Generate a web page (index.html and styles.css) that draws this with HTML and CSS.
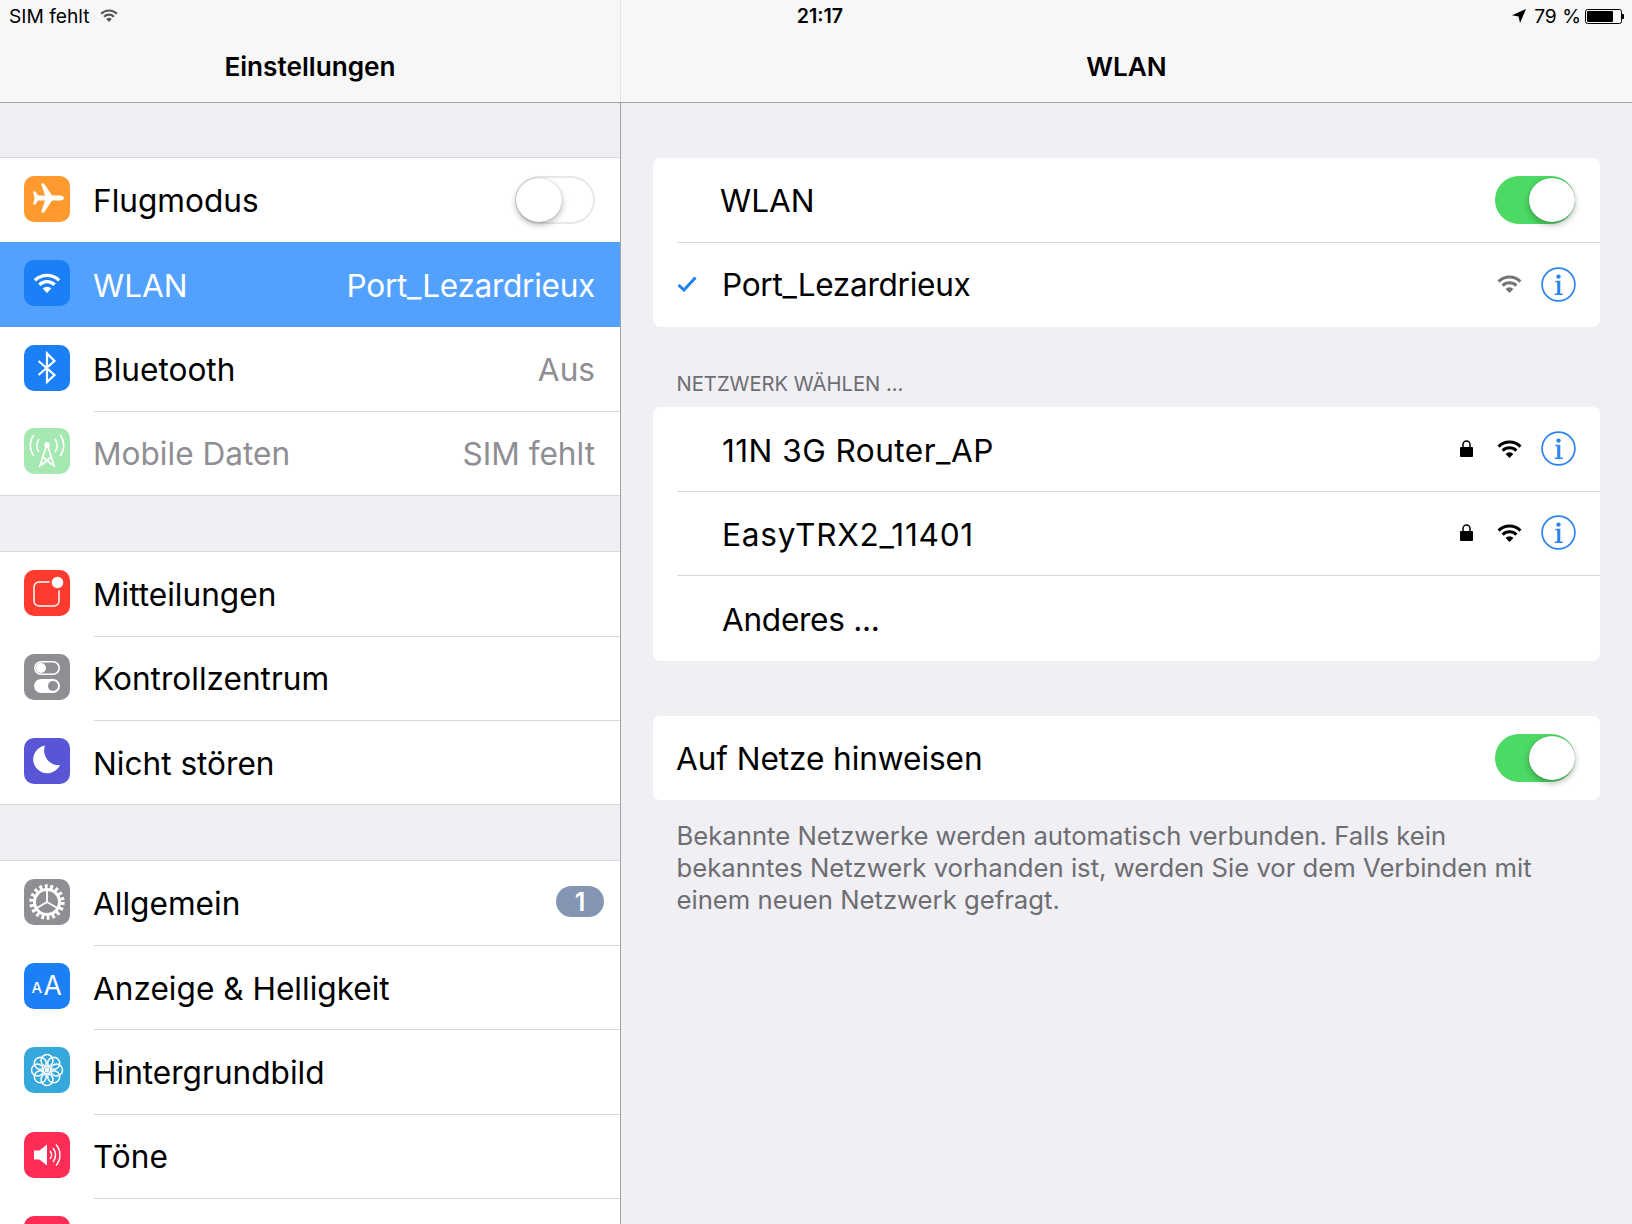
FILE: index.html
```html
<!DOCTYPE html>
<html lang="de">
<head>
<meta charset="utf-8">
<title>WLAN</title>
<link rel="stylesheet" href="styles.css">
</head>
<body>
<svg class="defs" aria-hidden="true">
  <symbol id="wifi" viewBox="0 0 25 18">
    <path d="M1.6 6.6A15.4 15.4 0 0 1 23.4 6.6" fill="none" stroke="currentColor" stroke-width="3"/>
    <path d="M5.6 10.6A9.8 9.8 0 0 1 19.4 10.6" fill="none" stroke="currentColor" stroke-width="3"/>
    <path d="M12.5 18L8.6 13.9A5.6 5.6 0 0 1 16.4 13.9Z" fill="currentColor"/>
  </symbol>
  <symbol id="info" viewBox="0 0 35 35">
    <circle cx="17.5" cy="17.5" r="16.4" fill="none" stroke="#2c84ee" stroke-width="1.7"/>
    <circle cx="17.5" cy="9.6" r="2.2" fill="#2c84ee"/>
    <path d="M14.4 13.8h4.9v12.8h2.5v1.500h-8v-1.500h2.400V15.300h-1.800z" fill="#2c84ee"/>
  </symbol>
  <symbol id="lock" viewBox="0 0 13 17">
    <path d="M3 7V4.500a3.500 3.500 0 0 1 7 0V7" fill="none" stroke="currentColor" stroke-width="1.500"/>
    <rect x="0" y="7" width="13" height="10" rx="1" fill="currentColor"/>
  </symbol>
</svg>

<header class="top">
  <div class="status">
    <div class="status-left">
      <span>SIM fehlt</span>
      <svg class="status-wifi"><use href="#wifi"/></svg>
    </div>
    <div class="status-time">21:17</div>
    <div class="status-right">
      <svg class="arrow" viewBox="0 0 14 14"><path d="M14 0L0 6.200l6.600 1.200L8 14z" fill="#000"/></svg>
      <span>79 %</span>
      <div class="battery"><div class="battery-fill"></div></div>
      <div class="battery-tip"></div>
    </div>
  </div>
  <div class="nav">
    <div class="nav-left">Einstellungen</div>
    <div class="nav-right">WLAN</div>
  </div>
</header>

<div class="main">
  <aside class="side">
    <section class="group">
      <div class="row">
        <div class="icon orange"><svg viewBox="0 0 46 46"><path fill="#fff" d="M40 22c0-1.500-2-2.500-4-2.500H28L20 7.500h-3L21 19.500h-7L11.500 15.500H9L10.500 22 9 28.500h2.500L14 24.500h7L17 36.500h3L28 24.500h8c2 0 4-1 4-2.500z"/></svg></div>
        <div class="body"><span class="raised">Flugmodus</span><div class="toggle"><div class="thumb"></div></div></div>
      </div>
      <div class="row selected">
        <div class="icon blue"><svg class="icon-wifi"><use href="#wifi"/></svg></div>
        <div class="body"><span>WLAN</span><span class="value tight">Port_Lezardrieux</span></div>
      </div>
      <div class="row">
        <div class="icon blue"><svg viewBox="0 0 46 46"><path d="M14.500 16L30.500 30 23 37V8.500L30.500 16 14.500 30" fill="none" stroke="#fff" stroke-width="2.200"/></svg></div>
        <div class="body sep"><span>Bluetooth</span><span class="value">Aus</span></div>
      </div>
      <div class="row disabled">
        <div class="icon mint"><svg viewBox="0 0 46 46">
          <g fill="none" stroke="#fff" stroke-width="1.700">
            <path d="M23 16L15.500 39M23 16L30.500 39M19 29L28.500 37M27 29L17.500 37"/>
            <path d="M10 7a17 17 0 0 0 0 21M36 7a17 17 0 0 1 0 21M15 11a11 11 0 0 0 0 13M31 11a11 11 0 0 1 0 13"/>
          </g>
          <circle cx="23" cy="17" r="2.800" fill="#fff"/>
        </svg></div>
        <div class="body"><span>Mobile Daten</span><span class="value">SIM fehlt</span></div>
      </div>
    </section>

    <section class="group">
      <div class="row">
        <div class="icon red"><svg viewBox="0 0 46 46">
          <rect x="10" y="12" width="25" height="24" rx="5" fill="none" stroke="#fff" stroke-width="1.500"/>
          <circle cx="33.500" cy="12.500" r="8" fill="#ff3b30"/>
          <circle cx="33.500" cy="12.500" r="5.800" fill="#fff"/>
        </svg></div>
        <div class="body sep"><span>Mitteilungen</span></div>
      </div>
      <div class="row">
        <div class="icon gray"><svg viewBox="0 0 46 46">
          <rect x="10.800" y="7.800" width="24.400" height="12.400" rx="6.200" fill="none" stroke="#fff" stroke-width="1.600"/>
          <circle cx="17" cy="14" r="5" fill="#fff"/>
          <rect x="10" y="25" width="26" height="14" rx="7" fill="#fff"/>
          <circle cx="29" cy="32" r="5" fill="#8e8e93"/>
        </svg></div>
        <div class="body sep"><span>Kontrollzentrum</span></div>
      </div>
      <div class="row">
        <div class="icon indigo"><svg viewBox="0 0 46 46"><path fill="#fff" d="M21 7.500A14 14 0 1 0 36 27 14.500 14.500 0 0 1 21 7.500z"/></svg></div>
        <div class="body"><span>Nicht stören</span></div>
      </div>
    </section>

    <section class="group">
      <div class="row">
        <div class="icon gray"><svg viewBox="0 0 46 46">
          <circle cx="23" cy="23" r="15.500" fill="none" stroke="#fff" stroke-width="4.400" stroke-dasharray="2.900 2.510"/>
          <circle cx="23" cy="23" r="12.500" fill="none" stroke="#fff" stroke-width="3"/>
          <path d="M23 23V10M23 23L12 29.500M23 23L34 29.500" stroke="#fff" stroke-width="1.800"/>
        </svg></div>
        <div class="body sep"><span>Allgemein</span><span class="badge">1</span></div>
      </div>
      <div class="row">
        <div class="icon blue"><svg viewBox="0 0 46 46">
          <text x="7.500" y="29.500" class="aa-small">A</text>
          <text x="19.500" y="32" class="aa-big">A</text>
        </svg></div>
        <div class="body sep"><span>Anzeige &amp; Helligkeit</span></div>
      </div>
      <div class="row">
        <div class="icon teal"><svg viewBox="0 0 46 46">
          <g fill="none" stroke="#fff" stroke-width="1.500">
            <circle cx="23" cy="13.500" r="6"/><circle cx="29.700" cy="16.300" r="6"/>
            <circle cx="32.500" cy="23" r="6"/><circle cx="29.700" cy="29.700" r="6"/>
            <circle cx="23" cy="32.500" r="6"/><circle cx="16.300" cy="29.700" r="6"/>
            <circle cx="13.500" cy="23" r="6"/><circle cx="16.300" cy="16.300" r="6"/>
          </g>
          <circle cx="23" cy="23" r="2.400" fill="#fff"/>
        </svg></div>
        <div class="body sep"><span>Hintergrundbild</span></div>
      </div>
      <div class="row">
        <div class="icon pink"><svg viewBox="0 0 46 46">
          <path fill="#fff" d="M10 18.500h5.500L23 12.500v21L15.500 27.500H10z"/>
          <path d="M26 19a6 6 0 0 1 0 8M29 16a11 11 0 0 1 0 14M32 12.500a16 16 0 0 1 0 21" fill="none" stroke="#fff" stroke-width="1.500"/>
        </svg></div>
        <div class="body sep"><span>Töne</span></div>
      </div>
      <div class="row">
        <div class="icon pink"></div>
      </div>
    </section>
  </aside>

  <main class="detail">
    <section class="card">
      <div class="row">
        <div class="body sep"><span class="slot-short">WLAN</span><div class="toggle on"><div class="thumb"></div></div></div>
      </div>
      <div class="row">
        <div class="body">
          <svg class="check" viewBox="0 0 20 16"><path d="M1.500 9l5.500 5L18.500 1.500" fill="none" stroke="#1f82f2" stroke-width="3"/></svg>
          <span class="name tight">Port_Lezardrieux</span>
          <svg class="wifi dim"><use href="#wifi"/></svg>
          <svg class="info"><use href="#info"/></svg>
        </div>
      </div>
    </section>

    <h2 class="label">NETZWERK WÄHLEN ...</h2>

    <section class="card">
      <div class="row">
        <div class="body sep">
          <span class="name slot wide">11N 3G Router_AP</span>
          <svg class="lock"><use href="#lock"/></svg>
          <svg class="wifi"><use href="#wifi"/></svg>
          <svg class="info"><use href="#info"/></svg>
        </div>
      </div>
      <div class="row">
        <div class="body sep">
          <span class="name slot wider">EasyTRX2_11401</span>
          <svg class="lock"><use href="#lock"/></svg>
          <svg class="wifi"><use href="#wifi"/></svg>
          <svg class="info"><use href="#info"/></svg>
        </div>
      </div>
      <div class="row row-tall">
        <div class="body"><span class="name slot tight">Anderes ...</span></div>
      </div>
    </section>

    <section class="card card-last">
      <div class="row">
        <div class="body"><span class="hint">Auf Netze hinweisen</span><div class="toggle on"><div class="thumb"></div></div></div>
      </div>
    </section>

    <p class="note">Bekannte Netzwerke werden automatisch verbunden. Falls kein<br>bekanntes Netzwerk vorhanden ist, werden Sie vor dem Verbinden mit<br>einem neuen Netzwerk gefragt.</p>
  </main>
</div>
</body>
</html>
```
FILE: styles.css
```css
* { box-sizing: border-box; }
html, body { margin: 0; padding: 0; }
body {
  width: 1632px;
  height: 1224px;
  overflow: hidden;
  background: #efeff4;
  color: #000;
  font-family: Inter, "Liberation Sans", sans-serif;
}
.defs { display: none; }

.top {
  height: 103px;
  background: linear-gradient(to right, transparent 620px, #e6e6e8 620px, #e6e6e8 621px, transparent 621px), #f7f7f8;
  border-bottom: 1px solid #a3a3a6;
}
.status {
  height: 32px;
  padding: 0 8px 0 9px;
  display: grid;
  grid-template-columns: 1fr auto 1fr;
  align-items: center;
  font-size: 19.200px;
}
.status-left { display: flex; align-items: center; gap: 11px; }
.status-wifi { width: 18px; height: 13px; color: #555; margin-top: -1px; }
.status-time { font-size: 19.600px; font-weight: 600; margin-left: 7px; }
.status-right { display: flex; align-items: center; justify-content: flex-end; }
.arrow { width: 14px; height: 14px; margin-right: 8px; }
.battery {
  width: 37px;
  height: 15px;
  margin-left: 4px;
  border: 1px solid #000;
  border-radius: 2.500px;
  padding: 1px;
}
.battery-fill { width: 79%; height: 100%; background: #000; border-radius: 1px; }
.battery-tip { width: 2px; height: 5px; background: #000; border-radius: 0 1px 1px 0; }

.nav {
  display: flex;
  height: 70px;
  font-size: 26.200px;
  font-weight: 600;
}
.nav-left, .nav-right {
  display: flex;
  align-items: center;
  justify-content: center;
  padding-bottom: 2px;
}
.nav-left { width: 620px; }
.nav-right { flex: 1; padding-left: 1px; }

.main { display: flex; height: 1121px; }
.side {
  width: 621px;
  border-right: 1px solid #a3a3a6;
  padding-top: 55px;
  overflow: hidden;
}
.group {
  background: #fff;
  box-shadow: 0 0 0 1px #d8d8dc;
  margin-bottom: 56.500px;
}
.row {
  height: 84.250px;
  display: flex;
  align-items: stretch;
  padding-left: 24px;
  font-size: 31.600px;
}
.row-tall { height: 86px; }
.side .row { gap: 24px; }
.side .body > span { padding-top: 2px; }
.side .body > span:first-child { margin-left: -1px; }
.side .body > .raised { padding-top: 0; }
.icon {
  flex: none;
  width: 46px;
  height: 46px;
  align-self: center;
  margin-top: -2px;
  border-radius: 10px;
  display: flex;
  align-items: center;
  justify-content: center;
}
.icon svg { width: 46px; height: 46px; display: block; }
.icon svg.icon-wifi { width: 28px; height: 20px; color: #fff; }
.orange { background: #ff9a2e; }
.blue { background: #1b7ff5; }
.mint { background: #a6e8b1; }
.red { background: #ff3b30; }
.gray { background: #8e8e93; }
.indigo { background: #5856d6; }
.teal { background: #36a8dc; }
.pink { background: #ff2d55; }
.aa-small { font: 500 15px Inter, sans-serif; fill: #fff; }
.aa-big { font: 400 26.500px Inter, sans-serif; fill: #fff; }

.body {
  flex: 1;
  min-width: 0;
  display: flex;
  align-items: center;
  justify-content: space-between;
  padding-right: 25px;
}
.sep { box-shadow: 0 1px 0 #d8d8dc; }
.value { color: #8e8e93; }
.tight { letter-spacing: -.3px; }
.wide { letter-spacing: .45px; }
.wider { letter-spacing: .74px; }
.selected { background: #52a1fe; color: #fff; }
.selected .value { color: #fff; }
.disabled .body { color: #8e8e93; }
.disabled .icon { margin-top: -3px; }

.side .body > .badge {
  width: 48px;
  height: 31px;
  margin: -2px -9px 0 0;
  padding: 0;
  border-radius: 15.500px;
  background: #8496b3;
  color: #fff;
  font-size: 25px;
  font-weight: 600;
  display: flex;
  align-items: center;
  justify-content: center;
}

.toggle {
  width: 80px;
  height: 48px;
  border-radius: 24px;
  background: #fff;
  box-shadow: inset 0 0 0 2px #e8e8ea;
  position: relative;
}
.thumb {
  position: absolute;
  left: 1px;
  top: 2px;
  width: 46px;
  height: 44px;
  border-radius: 50%;
  background: #fff;
  box-shadow: 0 3px 6px rgba(0, 0, 0, .28), 0 0 1px rgba(0, 0, 0, .35);
}
.toggle.on { background: #4cd964; box-shadow: none; }
.toggle.on .thumb { left: 34px; }

.detail { flex: 1; padding: 55px 32px 0; }
.card {
  background: #fff;
  border-radius: 7px;
  overflow: hidden;
}
.card-last { margin-top: 55px; }
.detail .body { padding-right: 24px; justify-content: flex-start; }
.detail .body > .toggle { margin-left: auto; margin-right: 1px; }
.slot-short { margin-left: 43px; }
.slot { margin-left: 45px; padding-top: 3px; }
.row-tall .slot { padding-top: 2px; }
.hint { margin-left: -1px; letter-spacing: -.08px; }
.name { flex: 1; }
.check { width: 20px; height: 16px; margin-right: 25px; flex: none; }
.wifi { width: 25px; height: 18px; margin-right: 19px; flex: none; color: #000; }
.wifi.dim { color: #737377; }
.info { width: 35px; height: 35px; flex: none; }
.lock { width: 13px; height: 17px; margin-right: 24px; flex: none; color: #000; }
.label {
  margin: 0;
  height: 80px;
  padding: 45px 0 0 23.500px;
  font-size: 20.200px;
  line-height: 24px;
  font-weight: 400;
  color: #6d6d72;
}
.note {
  margin: 20px 0 0;
  padding-left: 23.500px;
  font-size: 25.680px;
  line-height: 31.800px;
  color: #6d6d72;
}
```
